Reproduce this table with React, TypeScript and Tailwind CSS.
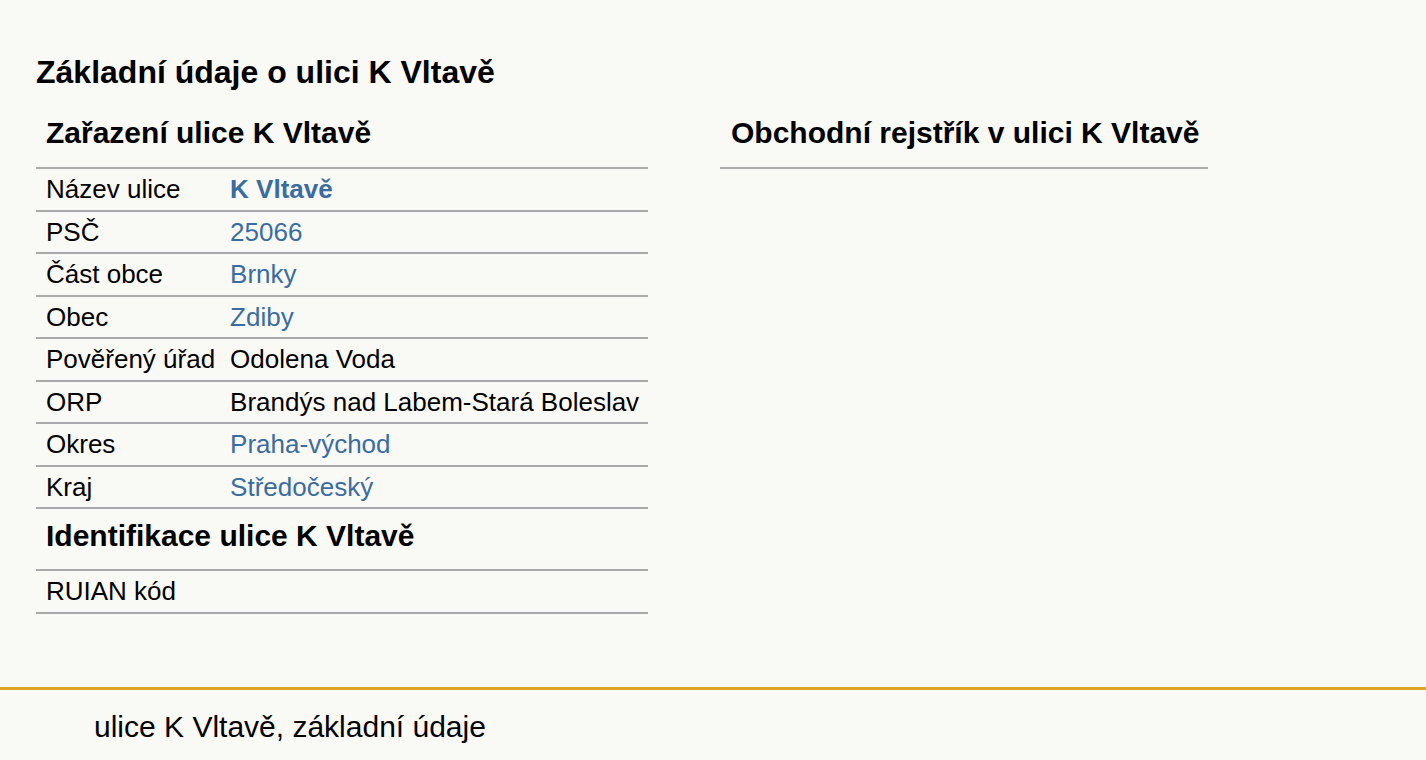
const rows: { label: string; value: string; link?: boolean; bold?: boolean }[] = [
  { label: "Název ulice", value: "K Vltavě", link: true, bold: true },
  { label: "PSČ", value: "25066", link: true },
  { label: "Část obce", value: "Brnky", link: true },
  { label: "Obec", value: "Zdiby", link: true },
  { label: "Pověřený úřad", value: "Odolena Voda" },
  { label: "ORP", value: "Brandýs nad Labem-Stará Boleslav" },
  { label: "Okres", value: "Praha-východ", link: true },
  { label: "Kraj", value: "Středočeský", link: true },
];

function Row({ label, value, link, bold }: { label: string; value: string; link?: boolean; bold?: boolean }) {
  return (
    <tr className="border-b-2 border-[#aaaaaa]">
      <td className="pl-[10px] pr-[5px] pt-[5px] pb-[5.5px] leading-[30px] whitespace-nowrap align-top">{label}</td>
      <td className="pl-[10px] pr-[5px] pt-[5px] pb-[5.5px] leading-[30px] w-full align-top">
        {link ? (
          <a href="#" className={`text-[#3a6ca0] ${bold ? "font-bold" : ""}`}>
            {value}
          </a>
        ) : (
          value
        )}
      </td>
    </tr>
  );
}

export default function App() {
  return (
    <div className="min-h-screen bg-[#f9f9f6] text-black font-['Liberation_Sans',Arial,sans-serif]">
      <main className="pl-[36px] pt-[54px]">
        <h1 className="text-[32px] leading-[37px] font-bold">Základní údaje o ulici K Vltavě</h1>
        <div className="flex gap-[72px] mt-[13px] items-start">
          <table className="w-[612px] border-collapse text-[26px]">
            <tbody>
              <tr className="border-b-2 border-[#aaaaaa]">
                <th colSpan={2} className="text-left pl-[10px] pt-[11px] pb-[17px] text-[30px] leading-[35px] font-bold">
                  Zařazení ulice K Vltavě
                </th>
              </tr>
              {rows.map((r) => (
                <Row key={r.label} {...r} />
              ))}
              <tr className="border-b-2 border-[#aaaaaa]">
                <th colSpan={2} className="text-left pl-[10px] pt-[9px] pb-[16px] text-[30px] leading-[35px] font-bold">
                  Identifikace ulice K Vltavě
                </th>
              </tr>
              <Row label="RUIAN kód" value="" />
            </tbody>
          </table>
          <div className="w-[488px] border-b-2 border-[#aaaaaa] pl-[11px] pt-[11px] pb-[17px]">
            <h2 className="text-[30px] leading-[35px] font-bold">Obchodní rejstřík v ulici K Vltavě</h2>
          </div>
        </div>
      </main>
      <footer className="mt-[73px] border-t-[3px] border-[#daa520] pl-[94px] pt-[20px] pb-[18px]">
        <p className="text-[30px] leading-[34px]">ulice K Vltavě, základní údaje</p>
      </footer>
    </div>
  );
}
